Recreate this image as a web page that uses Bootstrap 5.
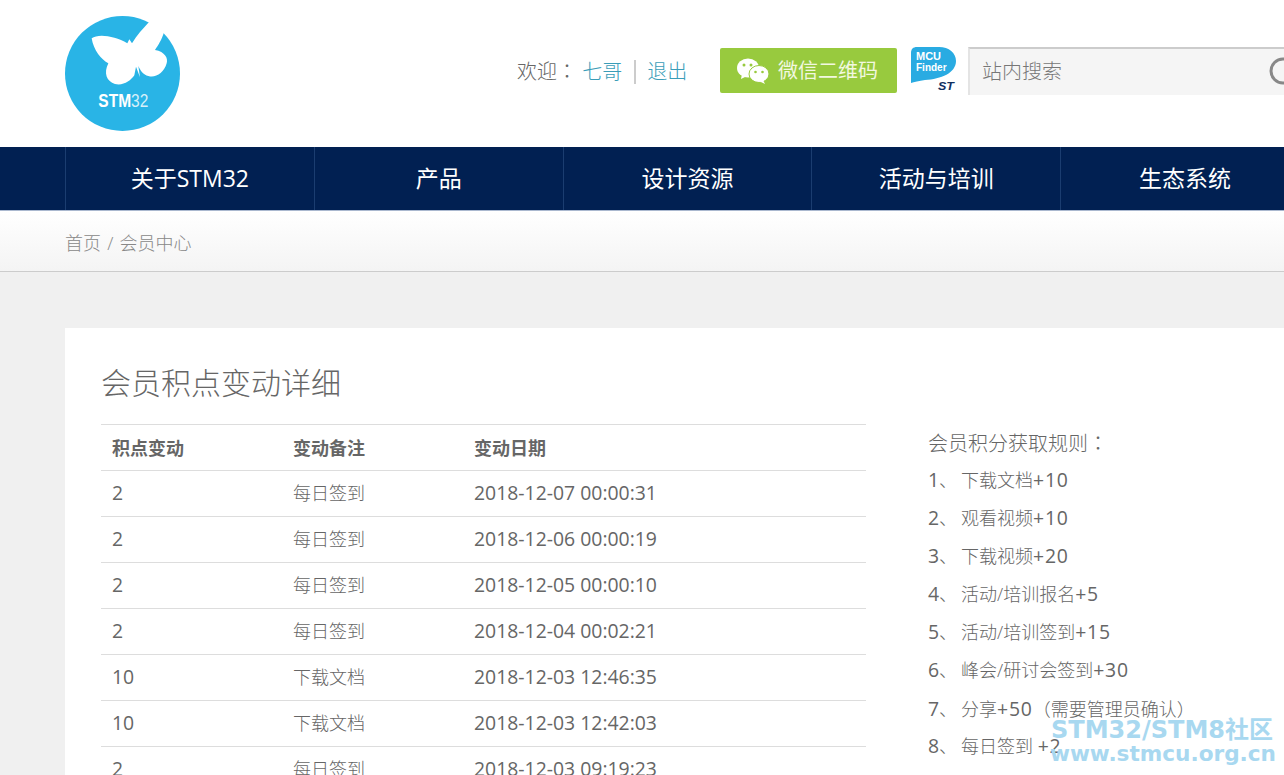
<!DOCTYPE html>
<html lang="zh-CN">
<head>
    <meta charset="UTF-8">
    <meta name="viewport" content="width=device-width, initial-scale=1.0">
    <title>会员积点变动详细</title>
    <link href="https://cdn.jsdelivr.net/npm/bootstrap@5.3.0/dist/css/bootstrap.min.css" rel="stylesheet">
    <style>
        html, body { height: 775px; overflow: hidden; }
        body { background: #f0f0f0; color: #666; font-family: "Open Sans", "Noto Sans CJK SC", sans-serif; font-weight: 300; font-size: 18px; position: relative; }
        .site-top { height: 147px; background: #fff; padding-left: 65px; width: 1700px; }
        .logo-box { width: 115px; height: 115px; margin-top: 16px; }
        .welcome { margin-left: 337px; margin-top: 57px; font-size: 20px; line-height: 28px; width: 203px; }
        .welcome a { color: #3a9db8; text-decoration: none; }
        .welcome .sep { display: inline-block; width: 2px; height: 24px; background: #ccc; margin: 0 11px 0 12px; vertical-align: -5px; }
        .tc-mark { font-family: "Noto Sans CJK TC", sans-serif; }
        .wx-btn { width: 177px; height: 45px; margin-top: 48px; padding-left: 16px; background: #98ca3e; color: #f2f8e0; border-radius: 2px; font-size: 20px; font-weight: 400; gap: 8px; }
        .mcu-box { margin: 47px 12px 0 14px; width: 45px; height: 44px; }
        .search-box { margin-top: 47px; width: 400px; height: 48px; background: #f5f5f5; border-top: 2px solid #ccc; border-left: 2px solid #e4e4e4; padding-left: 12px; font-size: 20px; color: #777; gap: 206px; }
        .search-box svg { margin-top: -2px; }
        .main-nav { height: 64px; background: #012052; border-bottom: 1px solid #aab8cf; padding-left: 65px; width: 1700px; }
        .main-nav a { width: 248.75px; height: 63px; line-height: 63px; text-align: center; color: #fff; font-size: 23px; font-weight: 400; text-decoration: none; border-left: 1px solid #1b3d70; }
        .crumb-bar { height: 61px; padding-left: 65px; line-height: 64px; font-size: 18px; color: #888; background: linear-gradient(#fff, #f4f4f4); border-bottom: 1px solid #ccc; }
        .crumb-bar span { padding: 0 1.5px; }
        .panel-box { margin: 56px 0 0 65px; width: 1500px; background: #fff; padding: 36px; height: 600px; }
        .panel-title { font-size: 30px; font-weight: 300; line-height: 38px; margin: 0 0 22px; color: #666; }
        .score-table { width: 765px; table-layout: fixed; margin: 0; --bs-table-color: #666; --bs-table-border-color: #ddd; border-top: 1px solid #ddd; }
        .score-table th, .score-table td { height: 46px; padding: 0 11px; vertical-align: middle; font-size: 18px; line-height: 24px; }
        .score-table td { padding-bottom: 2px; }
        .score-table th { font-weight: 700; }
        .num-txt, .score-table td.num-txt { font-size: 19.4px; font-weight: 400; }
        .col-a, .col-b { width: 181px; }
        .rule-box { margin-left: 62px; width: 400px; }
        .rule-title { font-size: 20px; height: 37px; line-height: 36px; padding-top: 1px; box-sizing: border-box; }
        .rule-list { line-height: 38px; }
        .rule-list > div { height: 38px; }
        .rule-list .rule-no { display: inline-block; width: 33px; }
        .rule-list .num-add { letter-spacing: .8px; }
        .watermark { position: absolute; right: 8px; bottom: 10px; text-align: right; color: #a8d8f0; font-family: "DejaVu Sans", "Noto Sans CJK SC", sans-serif; font-weight: 700; font-size: 24px; line-height: 25px; }
        .watermark div:first-child { margin-right: 3px; }
        .watermark div + div { font-size: 21.6px; line-height: 22px; }
    </style>
</head>
<body>
    <!-- 顶部 -->
    <div class="site-top d-flex align-items-start">
        <svg class="logo-box flex-shrink-0" viewBox="75 48 345 345">
            <circle cx="247.5" cy="220.5" r="172.5" fill="#29b4e6"/>
            <path fill="#fff" d="M155 115C175 100 225 108 262 130L268 118L276 130C290 105 310 85 325 68L350 48L372 97C365 120 355 135 345 150C375 155 385 175 380 190C372 220 345 235 325 228C310 225 300 210 295 198L300 232L288 200L283 226C272 242 250 258 225 252C200 245 190 220 205 190C185 180 160 150 155 115Z"/>
            <text x="175" y="320" font-family="Liberation Sans" font-size="53" font-weight="700" fill="#fff" textLength="150" lengthAdjust="spacingAndGlyphs">STM<tspan font-weight="400" fill="#d6f0fa">32</tspan></text>
        </svg>
        <div class="welcome flex-shrink-0">欢迎<span class="tc-mark" lang="zh-TW">：</span> <a href="#">七哥</a><span class="sep"></span><a href="#">退出</a></div>
        <div class="wx-btn d-flex align-items-center flex-shrink-0">
            <svg width="34" height="30" viewBox="0 0 34 30">
                <ellipse cx="12" cy="12" rx="11" ry="9.5" fill="#fff"/>
                <path fill="#fff" d="M6 18l-1 5 6-3z"/>
                <ellipse cx="23" cy="18" rx="10" ry="8.5" fill="#fff" stroke="#98ca3e"/>
                <path fill="#fff" d="M27 24l2 4-6-3z"/>
                <circle cx="8" cy="9" r="1.5" fill="#98ca3e"/><circle cx="15" cy="9" r="1.5" fill="#98ca3e"/>
                <circle cx="19.500" cy="16" r="1.300" fill="#98ca3e"/><circle cx="26.500" cy="16" r="1.300" fill="#98ca3e"/>
            </svg>
            <span>微信二维码</span>
        </div>
        <svg class="mcu-box flex-shrink-0" viewBox="0 0 45 44">
            <path fill="#29abe2" d="M6 0H28C38 0 45 6 45 14C45 26 30 32 14 33C8 34 3 35 0 36V6C0 2 2 0 6 0Z"/>
            <text x="5" y="13" font-family="Liberation Sans" font-size="11" font-weight="700" fill="#fff">MCU</text>
            <text x="5" y="24" font-family="Liberation Sans" font-size="10" font-weight="700" fill="#fff">Finder</text>
            <text x="27" y="43" font-family="Liberation Sans" font-size="10" font-weight="700" font-style="italic" fill="#12305f" textLength="16" lengthAdjust="spacingAndGlyphs">ST</text>
        </svg>
        <div class="search-box d-flex align-items-center flex-shrink-0">
            <span>站内搜索</span>
            <svg width="30" height="30" viewBox="0 0 30 30"><circle cx="15" cy="15" r="12" fill="none" stroke="#888" stroke-width="3"/></svg>
        </div>
    </div>

    <!-- 导航 -->
    <nav class="main-nav d-flex">
        <a href="#">关于STM32</a>
        <a href="#">产品</a>
        <a href="#">设计资源</a>
        <a href="#">活动与培训</a>
        <a href="#">生态系统</a>
    </nav>

    <div class="crumb-bar">首页 <span>/</span> 会员中心</div>

    <!-- 内容 -->
    <div class="panel-box">
        <h2 class="panel-title">会员积点变动详细</h2>
        <div class="d-flex align-items-start">
            <table class="table score-table flex-shrink-0">
                <thead>
                    <tr><th class="col-a">积点变动</th><th class="col-b">变动备注</th><th>变动日期</th></tr>
                </thead>
                <tbody>
                    <tr><td class="num-txt">2</td><td>每日签到</td><td class="num-txt">2018-12-07 00:00:31</td></tr>
                    <tr><td class="num-txt">2</td><td>每日签到</td><td class="num-txt">2018-12-06 00:00:19</td></tr>
                    <tr><td class="num-txt">2</td><td>每日签到</td><td class="num-txt">2018-12-05 00:00:10</td></tr>
                    <tr><td class="num-txt">2</td><td>每日签到</td><td class="num-txt">2018-12-04 00:02:21</td></tr>
                    <tr><td class="num-txt">10</td><td>下载文档</td><td class="num-txt">2018-12-03 12:46:35</td></tr>
                    <tr><td class="num-txt">10</td><td>下载文档</td><td class="num-txt">2018-12-03 12:42:03</td></tr>
                    <tr><td class="num-txt">2</td><td>每日签到</td><td class="num-txt">2018-12-03 09:19:23</td></tr>
                </tbody>
            </table>
            <div class="rule-box flex-shrink-0">
                <div class="rule-title">会员积分获取规则<span class="tc-mark" lang="zh-TW">：</span></div>
                <div class="rule-list">
                    <div><span class="rule-no"><span class="num-txt">1</span>、</span>下载文档<span class="num-txt num-add">+10</span></div>
                    <div><span class="rule-no"><span class="num-txt">2</span>、</span>观看视频<span class="num-txt num-add">+10</span></div>
                    <div><span class="rule-no"><span class="num-txt">3</span>、</span>下载视频<span class="num-txt num-add">+20</span></div>
                    <div><span class="rule-no"><span class="num-txt">4</span>、</span>活动/培训报名<span class="num-txt num-add">+5</span></div>
                    <div><span class="rule-no"><span class="num-txt">5</span>、</span>活动/培训签到<span class="num-txt num-add">+15</span></div>
                    <div><span class="rule-no"><span class="num-txt">6</span>、</span>峰会/研讨会签到<span class="num-txt num-add">+30</span></div>
                    <div><span class="rule-no"><span class="num-txt">7</span>、</span>分享<span class="num-txt num-add">+50</span><span class="tc-mark" lang="zh-TW">（</span>需要管理员确认<span class="tc-mark" lang="zh-TW">）</span></div>
                    <div><span class="rule-no"><span class="num-txt">8</span>、</span>每日签到 <span class="num-txt num-add">+2</span></div>
                </div>
            </div>
        </div>
    </div>

    <div class="watermark"><div>STM32/STM8社区</div><div>www.stmcu.org.cn</div></div>
</body>
</html>
